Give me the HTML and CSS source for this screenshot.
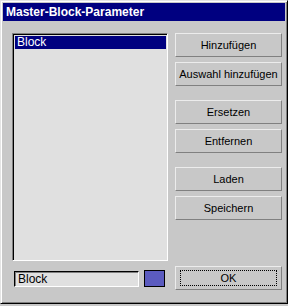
FILE: index.html
```html
<!DOCTYPE html>
<html lang="de">
<head>
  <meta charset="UTF-8">
  <title>Master-Block-Parameter</title>
  <link rel="stylesheet" href="styles.css">
</head>
<body>
  <div class="window">
    <div class="titlebar">Master-Block-Parameter</div>
    <div class="content">
      <div class="left-col">
        <ul class="block-list">
          <li class="selected">Block</li>
        </ul>
        <div class="name-row">
          <div class="name-input">Block</div>
          <div class="swatch"></div>
        </div>
      </div>
      <div class="right-col">
        <div class="btn-group">
          <button class="btn">Hinzufügen</button>
          <button class="btn">Auswahl hinzufügen</button>
        </div>
        <div class="btn-group">
          <button class="btn">Ersetzen</button>
          <button class="btn">Entfernen</button>
        </div>
        <div class="btn-group">
          <button class="btn">Laden</button>
          <button class="btn">Speichern</button>
        </div>
        <button class="btn ok-btn"><span class="focus">OK</span></button>
      </div>
    </div>
  </div>
</body>
</html>
```

FILE: styles.css
```css
body { margin: 0; background: #c8c8c8; font-family: 'Liberation Sans', Arial, sans-serif; font-size: 12px; }
.window { width: 288px; height: 304px; box-sizing: border-box; border: 1px solid; border-color: #e4e4e4 #000 #000 #e4e4e4; box-shadow: inset 1px 1px #fff, inset -1px -1px #808080; padding: 2px; display: flex; flex-direction: column; }
.titlebar { height: 18px; background: #000080; color: #fff; font-weight: bold; font-size: 12px; line-height: 18px; padding-left: 3px; flex-shrink: 0; }
.content { flex: 1; display: flex; padding: 12px 0 0 9px; gap: 7px; }
.left-col { width: 156px; display: flex; flex-direction: column; }
.block-list { list-style: none; margin: 0; padding: 1px; height: 228px; box-sizing: border-box; background: #e0e0e0; border: 1px solid; border-color: #808080 #fff #fff #808080; box-shadow: inset 1px 1px #000; }
.block-list li { height: 13px; line-height: 13px; padding-left: 2px; margin: 1px 0 0 1px; }
.block-list li.selected { background: #000080; color: #fff; }
.name-row { display: flex; align-items: center; gap: 5px; margin-top: 9px; padding-left: 2px; }
.name-input { width: 125px; height: 16px; box-sizing: border-box; background: #e0e0e0; border: 1px solid; border-color: #000 #fff #fff #000; box-shadow: inset 1px 1px #808080; line-height: 14px; padding-left: 3px; }
.swatch { width: 21px; height: 17px; box-sizing: border-box; background: #5b5bbf; border: 1px solid #000; }
.right-col { width: 107px; display: flex; flex-direction: column; }
.btn-group { display: flex; flex-direction: column; gap: 5px; margin-bottom: 14px; }
.btn { height: 24px; box-sizing: border-box; background: #c8c8c8; border: 1px solid; border-color: #ececec #808080 #808080 #ececec; font-family: inherit; font-size: 11px; color: #000; padding: 0; white-space: nowrap; cursor: pointer; }
.ok-btn { margin-top: 32px; display: flex; padding: 3px 4px; }
.focus { flex: 1; border: 1px dotted #000; display: flex; align-items: center; justify-content: center; }
```
